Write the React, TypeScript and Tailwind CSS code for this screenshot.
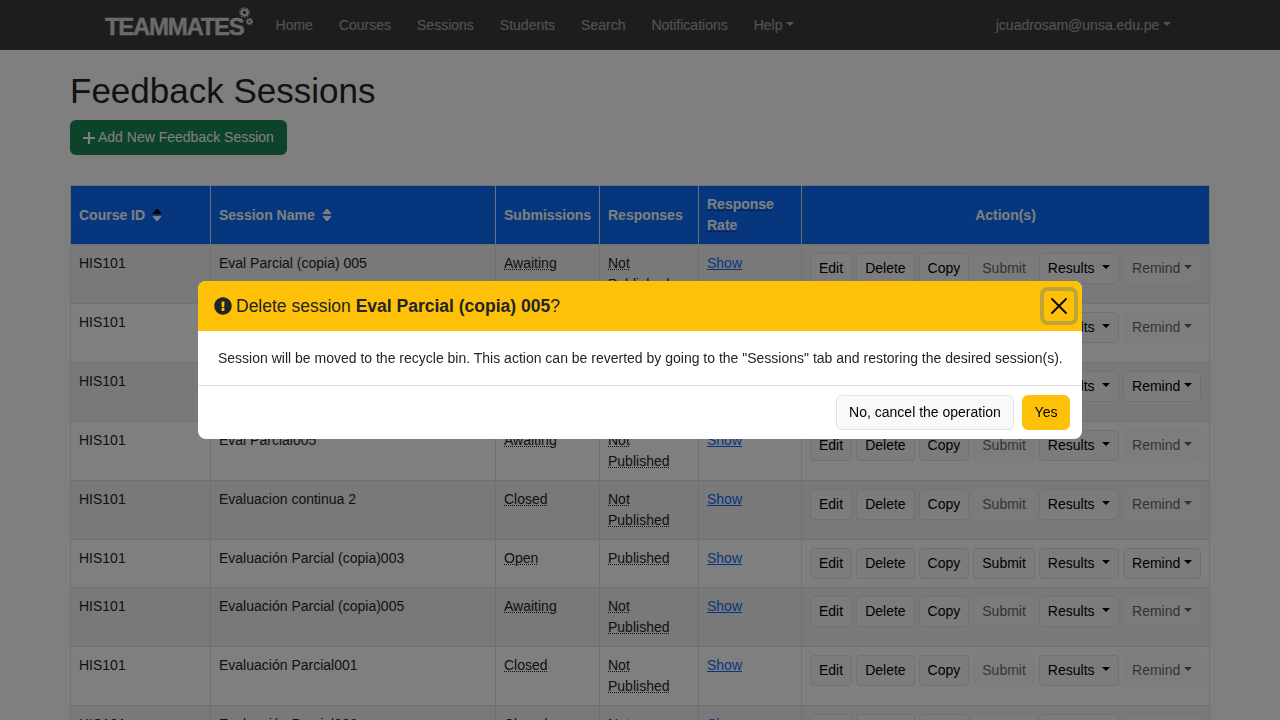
import { FaExclamationCircle } from 'react-icons/fa';

type Session = {
  name: string;
  status: string;
  published: boolean;
  canSubmit: boolean;
  canRemind: boolean;
};

const sessions: Session[] = [
  { name: 'Eval Parcial (copia) 005', status: 'Awaiting', published: false, canSubmit: false, canRemind: false },
  { name: 'Eval Parcial (copia) 004', status: 'Awaiting', published: false, canSubmit: false, canRemind: false },
  { name: 'Eval Parcial (copia) 003', status: 'Open', published: false, canSubmit: true, canRemind: true },
  { name: 'Eval Parcial005', status: 'Awaiting', published: false, canSubmit: false, canRemind: false },
  { name: 'Evaluacion continua 2', status: 'Closed', published: false, canSubmit: false, canRemind: false },
  { name: 'Evaluación Parcial (copia)003', status: 'Open', published: true, canSubmit: true, canRemind: true },
  { name: 'Evaluación Parcial (copia)005', status: 'Awaiting', published: false, canSubmit: false, canRemind: false },
  { name: 'Evaluación Parcial001', status: 'Closed', published: false, canSubmit: false, canRemind: false },
  { name: 'Evaluación Parcial002', status: 'Closed', published: false, canSubmit: false, canRemind: false },
];

const navItems = ['Home', 'Courses', 'Sessions', 'Students', 'Search', 'Notifications'];

function Caret({ className = '' }: { className?: string }) {
  return (
    <span
      className={`inline-block align-[3.57px] border-t-[4.2px] border-x-[4.2px] border-x-transparent border-t-current ${className}`}
    />
  );
}

// Two small cogs sitting on the end of the wordmark
function Gears() {
  return (
    <svg
      viewBox="0 0 14 19"
      className="absolute left-[134px] -top-[8px] w-[14px] h-[19px]"
      fill="none"
      stroke="currentColor"
    >
      <circle cx="5.5" cy="5.5" r="2.8" strokeWidth="2" />
      <circle cx="5.5" cy="5.5" r="4.6" strokeWidth="1.5" strokeDasharray="1.6 1.3" />
      <circle cx="10.5" cy="14.5" r="1.9" strokeWidth="1.5" />
      <circle cx="10.5" cy="14.5" r="3.1" strokeWidth="1.2" strokeDasharray="1.2 1.1" />
    </svg>
  );
}

function SortIcon({ active = false }: { active?: boolean }) {
  return (
    <svg viewBox="0 0 10 14" className="inline-block w-[10px] h-[14px] ml-[7px] align-[-2px]">
      <path
        d="M5 1 L9 5.6 H1 Z"
        fill={active ? '#000000' : '#ffffff'}
        stroke={active ? '#000000' : '#ffffff'}
        strokeWidth="1"
        strokeLinejoin="round"
      />
      <path d="M5 13 L9 8.4 H1 Z" fill="#ffffff" stroke="#ffffff" strokeWidth="1" strokeLinejoin="round" />
    </svg>
  );
}

function ActionButton({ label, disabled = false, caret = false, wide = false }: { label: string; disabled?: boolean; caret?: boolean; wide?: boolean }) {
  return (
    <button
      className={`h-[31px] px-2 rounded border text-sm leading-[21px] whitespace-nowrap bg-[#f8f9fa] text-black ${
        disabled ? 'opacity-60 border-[#f1f3f5]' : 'border-[#dee2e6]'
      }`}
    >
      {label}
      {wide && ' '}
      {caret && <Caret className="ml-[3.6px]" />}
    </button>
  );
}

function Dotted({ children }: { children: string }) {
  return <span className="underline decoration-dotted decoration-1 decoration-[#212529]">{children}</span>;
}

export default function App() {
  return (
    <div className="h-screen overflow-hidden bg-white text-[#212529] text-sm leading-[21px] font-['Liberation_Sans',Arial,sans-serif]">
      {/* Navbar */}
      <nav className="h-[50px] bg-[#3b3b3b] flex items-center pl-[105px] pr-[109px]">
        <div className="relative text-[#d4d4d4] mt-[4px] mr-[19px]">
          <span className="block text-[24px] leading-[24px] font-bold tracking-[-1.3px] [-webkit-text-stroke:0.4px_#d4d4d4]">
            TEAMMATES
          </span>
          <Gears />
        </div>
        {navItems.map((item) => (
          <a key={item} className="px-[13px] text-white/55">
            {item}
          </a>
        ))}
        <a className="px-[13px] text-white/55">
          Help
          <Caret className="ml-[3.6px]" />
        </a>
        <a className="ml-auto text-white/55">
          jcuadrosam@unsa.edu.pe
          <Caret className="ml-[3.6px]" />
        </a>
      </nav>

      <main className="px-[70px] pt-[20px]">
        <h1 className="text-[35px] leading-[42px] mb-2">Feedback Sessions</h1>
        <button className="h-[35px] w-[217px] mb-[30px] pl-[13px] rounded-md bg-[#198754] text-white flex items-center gap-[3px]">
          <svg viewBox="0 0 12 12" className="w-[12px] h-[12px]" stroke="currentColor" strokeWidth="2.2">
            <path d="M6 0 V12 M0 6 H12" />
          </svg>
          Add New Feedback Session
        </button>

        <table className="w-[1139px] table-fixed border-collapse">
          <colgroup>
            <col className="w-[140px]" />
            <col className="w-[285px]" />
            <col className="w-[104px]" />
            <col className="w-[99px]" />
            <col className="w-[103px]" />
            <col className="w-[408px]" />
          </colgroup>
          <thead>
            <tr className="h-[59px] bg-[#0d6efd] text-white font-bold">
              <th className="border border-[#dee2e6] px-2 text-left font-bold">
                Course ID
                <SortIcon active />
              </th>
              <th className="border border-[#dee2e6] px-2 text-left font-bold">
                Session Name
                <SortIcon />
              </th>
              <th className="border border-[#dee2e6] px-2 text-left font-bold">Submissions</th>
              <th className="border border-[#dee2e6] px-2 text-left font-bold">Responses</th>
              <th className="border border-[#dee2e6] px-2 text-left font-bold">
                <Dotted>Response</Dotted> <Dotted>Rate</Dotted>
              </th>
              <th className="border border-[#dee2e6] px-2 text-center font-bold">Action(s)</th>
            </tr>
          </thead>
          <tbody>
            {sessions.map((s, i) => (
              <tr key={i} className={i % 2 === 0 ? 'bg-[#f2f2f2]' : 'bg-white'}>
                <td className="border border-[#dee2e6] p-2 align-top">HIS101</td>
                <td className="border border-[#dee2e6] p-2 align-top">{s.name}</td>
                <td className="border border-[#dee2e6] p-2 align-top">
                  <Dotted>{s.status}</Dotted>
                </td>
                <td className="border border-[#dee2e6] p-2 align-top">
                  {s.published ? (
                    <Dotted>Published</Dotted>
                  ) : (
                    <>
                      <Dotted>Not</Dotted> <Dotted>Published</Dotted>
                    </>
                  )}
                </td>
                <td className="border border-[#dee2e6] p-2 align-top">
                  <a className="text-[#0d6efd] underline">Show</a>
                </td>
                <td className="border border-[#dee2e6] p-2 align-top">
                  <div className="flex gap-1">
                    <ActionButton label="Edit" />
                    <ActionButton label="Delete" />
                    <ActionButton label="Copy" />
                    <ActionButton label="Submit" disabled={!s.canSubmit} />
                    <ActionButton label="Results" caret wide />
                    <ActionButton label="Remind" caret disabled={!s.canRemind} />
                  </div>
                </td>
              </tr>
            ))}
          </tbody>
        </table>
      </main>

      {/* Backdrop and delete confirmation */}
      <div className="fixed inset-0 bg-black/50 flex justify-center pt-[281px]">
        <div className="w-[884px] h-[158px] bg-white rounded-lg overflow-hidden flex flex-col">
          <div className="h-[50px] shrink-0 bg-[#ffc107] flex items-center pl-4 pr-[8px]">
            <FaExclamationCircle className="w-[18px] h-[18px] mr-[4px]" />
            <span className="text-[17.5px]">
              Delete session <b>Eval Parcial (copia) 005</b>?
            </span>
            <button className="ml-auto w-[30px] h-[30px] rounded flex items-center justify-center ring-4 ring-[#bca437]">
              <svg viewBox="0 0 16 16" className="w-[16px] h-[16px]" stroke="#000000" strokeWidth="1.8" strokeLinecap="round">
                <path d="M1 1 L15 15 M15 1 L1 15" />
              </svg>
            </button>
          </div>
          <div className="h-[55px] shrink-0 pl-5 pr-2 pt-[17px] border-b border-[#dee2e6] whitespace-nowrap">
            Session will be moved to the recycle bin. This action can be reverted by going to the "Sessions" tab and
            restoring the desired session(s).
          </div>
          <div className="flex-1 flex items-center justify-end gap-2 pr-3">
            <button className="h-[35px] w-[178px] rounded-md border border-[#dee2e6] bg-[#f8f9fa] text-black">
              No, cancel the operation
            </button>
            <button className="h-[35px] w-[48px] rounded-md border border-[#ffc107] bg-[#ffc107] text-black">Yes</button>
          </div>
        </div>
      </div>
    </div>
  );
}
